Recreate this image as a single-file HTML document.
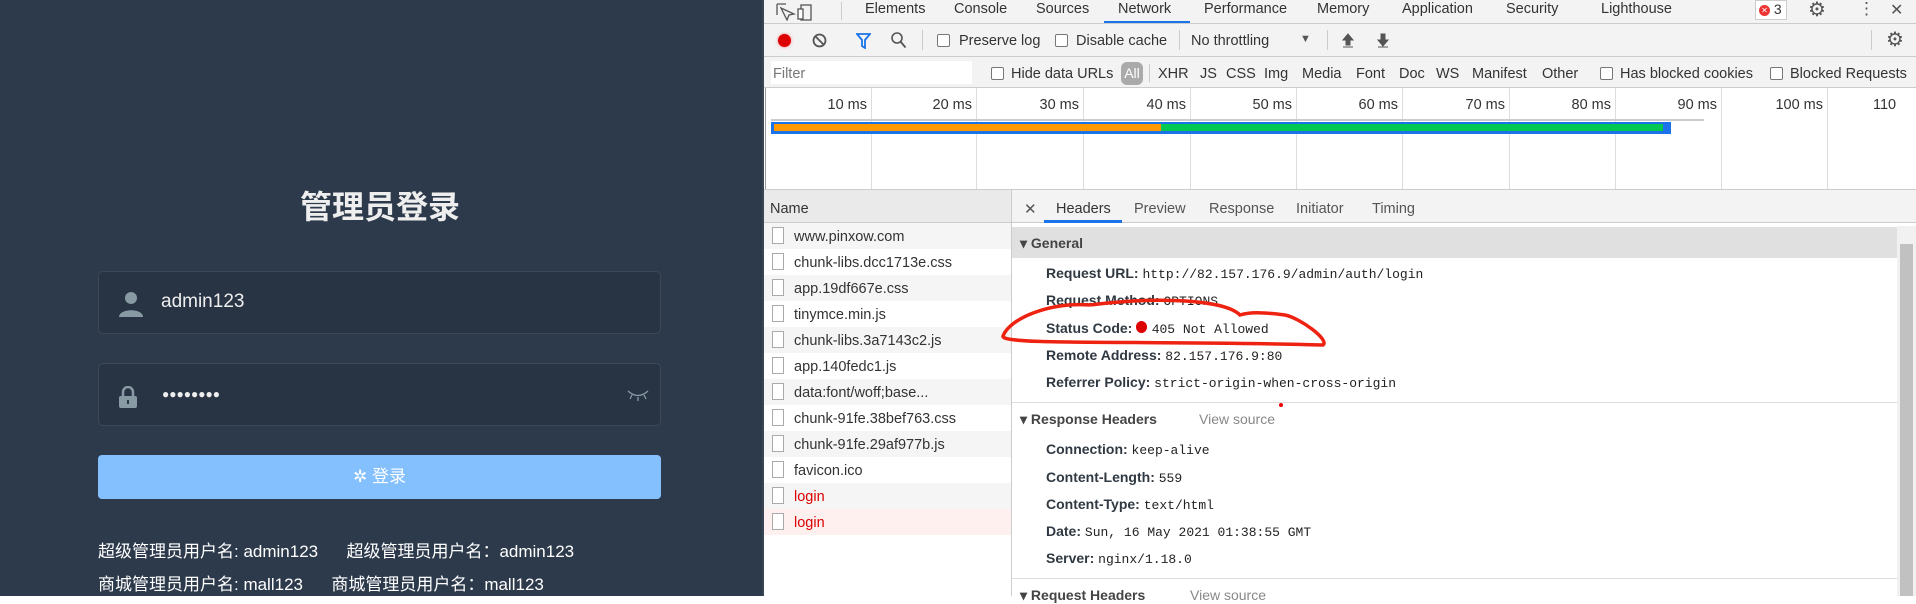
<!DOCTYPE html>
<html><head><meta charset="utf-8"><style>
*{margin:0;padding:0;box-sizing:border-box}
body{width:1916px;height:596px;overflow:hidden;position:relative;font-family:"Liberation Sans","Noto Sans CJK SC",sans-serif;background:#fff}
.a{position:absolute;white-space:nowrap}
#left{position:absolute;left:0;top:0;width:763px;height:596px;background:#2d3a4b}
.inp{position:absolute;left:98px;width:563px;height:63px;background:#283443;border:1px solid rgba(255,255,255,.1);border-radius:5px}
.dt{font-size:14.5px;color:#333}
.cb{position:absolute;width:13px;height:13px;border:1px solid #777;border-radius:2px;background:#fff}
.row{position:absolute;left:764px;width:247px;height:26px;font-size:14.5px;color:#333}
.row .ic{position:absolute;left:8px;top:4px;width:12px;height:17px;border:1px solid #aaa;background:#fff}
.row span{position:absolute;left:30px;top:6px}
.k{font-weight:bold;color:#303942;font-size:14px}
.v{font-family:"Liberation Mono","DejaVu Sans Mono",monospace;font-size:13px;color:#222}
.grid{position:absolute;top:88px;width:1px;height:102px;background:#ddd}
.lbl{position:absolute;top:97px;font-size:14.5px;color:#333;text-align:right;width:60px}
</style></head><body>
<div id="left">
  <div class="a" style="left:0;width:760px;top:182px;text-align:center;font-size:32px;font-weight:bold;color:#eee">管理员登录</div>
  <div class="inp" style="top:271px">
    <svg class="a" style="left:19px;top:19px" width="26" height="26" viewBox="0 0 26 26"><circle cx="13" cy="7" r="6" fill="#889aa4"/><path d="M1 26 C1 17 25 17 25 26Z" fill="#889aa4"/></svg>
    <div class="a" style="left:62px;top:19px;font-size:19px;color:#eee">admin123</div>
  </div>
  <div class="inp" style="top:363px">
    <svg class="a" style="left:19px;top:22px" width="20" height="22" viewBox="0 0 20 22"><path d="M5 10V6a5 5 0 0 1 10 0v4" stroke="#889aa4" stroke-width="2.5" fill="none"/><rect x="1" y="10" width="18" height="12" rx="2" fill="#889aa4"/><rect x="9" y="14" width="2" height="4" fill="#283443"/></svg>
    <div class="a" style="left:63px;top:23px;font-size:12px;color:#eee;letter-spacing:0px">●●●●●●●●</div>
    <svg class="a" style="left:528px;top:24px" width="22" height="14" viewBox="0 0 22 14"><path d="M1 3 Q11 12 21 3 M5 7 L3 11 M11 9 V13 M17 7 L19 11" stroke="#889aa4" stroke-width="1.3" fill="none"/></svg>
  </div>
  <div class="a" style="left:98px;top:455px;width:563px;height:44px;background:#83c0fd;border-radius:4px;color:#fff;font-size:17px;text-align:center;line-height:44px">✲ 登录</div>
  <div class="a" style="left:98px;top:537px;font-size:17px;color:#fff">超级管理员用户名: admin123 &nbsp;&nbsp;&nbsp;&nbsp; 超级管理员用户名：admin123</div>
  <div class="a" style="left:98px;top:570px;font-size:17px;color:#fff">商城管理员用户名: mall123 &nbsp;&nbsp;&nbsp;&nbsp; 商城管理员用户名：mall123</div>
</div>
<div class="a" style="left:762px;top:0;width:2px;height:596px;background:#3a4553"></div>
<div class="a" style="left:764px;top:0;width:1152px;height:24px;background:#f3f3f3;border-bottom:1px solid #ccc"></div>
<svg class="a" style="left:776px;top:3px" width="40" height="18" viewBox="0 0 40 18"><path d="M1 1h9M1 1v11M5 5l6 12 2-5 5-1z" stroke="#555" fill="none" stroke-width="1.3"/><rect x="25" y="2" width="10" height="15" stroke="#555" fill="none" stroke-width="1.3"/><rect x="22" y="6" width="5" height="10" stroke="#555" fill="#fff" stroke-width="1.3"/></svg>
<div class="a" style="left:841px;top:2px;width:1px;height:18px;background:#ccc"></div>
<div class="a dt" style="left:865px;top:1px">Elements</div>
<div class="a dt" style="left:954px;top:1px">Console</div>
<div class="a dt" style="left:1036px;top:1px">Sources</div>
<div class="a dt" style="left:1118px;top:1px">Network</div>
<div class="a" style="left:1104px;top:21px;width:86px;height:2px;background:#1a73e8"></div>
<div class="a dt" style="left:1204px;top:1px">Performance</div>
<div class="a dt" style="left:1317px;top:1px">Memory</div>
<div class="a dt" style="left:1402px;top:1px">Application</div>
<div class="a dt" style="left:1506px;top:1px">Security</div>
<div class="a dt" style="left:1601px;top:1px">Lighthouse</div>
<div class="a" style="left:1755px;top:0;width:32px;height:20px;border:1px solid #ccc;background:#fff;font-size:14px;color:#333;padding-left:3px"><span style="display:inline-block;width:11px;height:11px;border-radius:50%;background:#e33;color:#fff;font-size:8px;text-align:center;line-height:11px;vertical-align:1px">✕</span> 3</div>
<div class="a" style="left:1808px;top:-3px;font-size:20px;color:#555">⚙</div>
<div class="a" style="left:1858px;top:-1px;font-size:17px;color:#555">⋮</div>
<div class="a" style="left:1890px;top:0;font-size:16px;color:#555">✕</div>
<div class="a" style="left:764px;top:24px;width:1152px;height:33px;background:#f3f3f3;border-bottom:1px solid #ccc"></div>
<div class="a" style="left:778px;top:34px;width:13px;height:13px;border-radius:50%;background:#d00;box-shadow:0 0 3px #f88"></div>
<svg class="a" style="left:812px;top:33px" width="15" height="15" viewBox="0 0 15 15"><circle cx="7.5" cy="7.5" r="6" stroke="#555" stroke-width="1.8" fill="none"/><path d="M3.5 3.5l8 8" stroke="#555" stroke-width="1.8"/></svg>
<svg class="a" style="left:856px;top:33px" width="15" height="16" viewBox="0 0 15 16"><path d="M1 1h13L9 7v8L6 13V7z" fill="none" stroke="#1a73e8" stroke-width="1.8"/></svg>
<svg class="a" style="left:891px;top:32px" width="16" height="17" viewBox="0 0 16 17"><circle cx="6" cy="6" r="5" stroke="#555" stroke-width="1.6" fill="none"/><path d="M9.5 9.5l5 6" stroke="#555" stroke-width="1.8"/></svg>
<div class="a" style="left:922px;top:30px;width:1px;height:20px;background:#ccc"></div>
<div class="cb" style="left:937px;top:34px"></div><div class="a dt" style="left:959px;top:33px">Preserve log</div>
<div class="cb" style="left:1055px;top:34px"></div><div class="a dt" style="left:1076px;top:33px">Disable cache</div>
<div class="a" style="left:1179px;top:30px;width:1px;height:20px;background:#ccc"></div>
<div class="a dt" style="left:1191px;top:33px">No throttling</div>
<div class="a" style="left:1300px;top:33px;font-size:11px;color:#555">▼</div>
<div class="a" style="left:1327px;top:30px;width:1px;height:20px;background:#ccc"></div>
<svg class="a" style="left:1342px;top:32px" width="50" height="16" viewBox="0 0 50 16"><path d="M6 2l-5 6h3v5h4V8h3z M1 15h10" fill="#555" stroke="#555" stroke-width="1"/><path d="M41 14l-5-6h3V2h4v6h3z M36 15h10" fill="#555" stroke="#555" stroke-width="1"/></svg>
<div class="a" style="left:1871px;top:30px;width:1px;height:20px;background:#ccc"></div>
<div class="a" style="left:1886px;top:27px;font-size:20px;color:#555">⚙</div>
<div class="a" style="left:764px;top:57px;width:1152px;height:31px;background:#f3f3f3;border-bottom:1px solid #ccc"></div>
<div class="a" style="left:771px;top:61px;width:201px;height:23px;background:#fff"></div>
<div class="a" style="left:773px;top:66px;font-size:14.5px;color:#777">Filter</div>
<div class="cb" style="left:991px;top:67px"></div><div class="a dt" style="left:1011px;top:66px">Hide data URLs</div>
<div class="a" style="left:1121px;top:62px;width:22px;height:23px;border-radius:6px;background:#aaa;color:#fff;font-size:14px;text-align:center;line-height:23px">All</div>
<div class="a" style="left:1149px;top:64px;width:1px;height:18px;background:#ccc"></div>
<div class="a dt" style="left:1158px;top:66px">XHR</div>
<div class="a dt" style="left:1200px;top:66px">JS</div>
<div class="a dt" style="left:1226px;top:66px">CSS</div>
<div class="a dt" style="left:1264px;top:66px">Img</div>
<div class="a dt" style="left:1302px;top:66px">Media</div>
<div class="a dt" style="left:1356px;top:66px">Font</div>
<div class="a dt" style="left:1399px;top:66px">Doc</div>
<div class="a dt" style="left:1436px;top:66px">WS</div>
<div class="a dt" style="left:1472px;top:66px">Manifest</div>
<div class="a dt" style="left:1542px;top:66px">Other</div>
<div class="cb" style="left:1600px;top:67px"></div><div class="a dt" style="left:1620px;top:66px">Has blocked cookies</div>
<div class="cb" style="left:1770px;top:67px"></div><div class="a dt" style="left:1790px;top:66px">Blocked Requests</div>
<div class="grid" style="left:765px;background:#999"></div>
<div class="grid" style="left:871px"></div><div class="lbl" style="left:807px">10 ms</div>
<div class="grid" style="left:976px"></div><div class="lbl" style="left:912px">20 ms</div>
<div class="grid" style="left:1083px"></div><div class="lbl" style="left:1019px">30 ms</div>
<div class="grid" style="left:1190px"></div><div class="lbl" style="left:1126px">40 ms</div>
<div class="grid" style="left:1296px"></div><div class="lbl" style="left:1232px">50 ms</div>
<div class="grid" style="left:1402px"></div><div class="lbl" style="left:1338px">60 ms</div>
<div class="grid" style="left:1509px"></div><div class="lbl" style="left:1445px">70 ms</div>
<div class="grid" style="left:1615px"></div><div class="lbl" style="left:1551px">80 ms</div>
<div class="grid" style="left:1721px"></div><div class="lbl" style="left:1657px">90 ms</div>
<div class="grid" style="left:1827px"></div><div class="lbl" style="left:1763px">100 ms</div>
<div class="a dt" style="left:1873px;top:97px">110</div>
<div class="a" style="left:771px;top:119px;width:933px;height:2px;background:#ccc"></div>
<div class="a" style="left:771px;top:122px;width:900px;height:12px;background:#1a73e8"></div>
<div class="a" style="left:774px;top:124px;width:387px;height:7px;background:#f90"></div>
<div class="a" style="left:1161px;top:124px;width:502px;height:7px;background:#00c853"></div>
<div class="a" style="left:764px;top:189px;width:1152px;height:1px;background:#ccc"></div>
<div class="a" style="left:764px;top:190px;width:247px;height:33px;background:#eaeaea;border-bottom:1px solid #ccc"></div>
<div class="a dt" style="left:770px;top:201px">Name</div>
<div class="row" style="top:223px;background:#f5f5f5"><div class="ic"></div><span>www.pinxow.com</span></div>
<div class="row" style="top:249px"><div class="ic"></div><span>chunk-libs.dcc1713e.css</span></div>
<div class="row" style="top:275px;background:#f5f5f5"><div class="ic"></div><span>app.19df667e.css</span></div>
<div class="row" style="top:301px"><div class="ic"></div><span>tinymce.min.js</span></div>
<div class="row" style="top:327px;background:#f5f5f5"><div class="ic"></div><span>chunk-libs.3a7143c2.js</span></div>
<div class="row" style="top:353px"><div class="ic"></div><span>app.140fedc1.js</span></div>
<div class="row" style="top:379px;background:#f5f5f5"><div class="ic"></div><span>data:font/woff;base...</span></div>
<div class="row" style="top:405px"><div class="ic"></div><span>chunk-91fe.38bef763.css</span></div>
<div class="row" style="top:431px;background:#f5f5f5"><div class="ic"></div><span>chunk-91fe.29af977b.js</span></div>
<div class="row" style="top:457px"><div class="ic"></div><span>favicon.ico</span></div>
<div class="row" style="top:483px;background:#f5f5f5;color:#d00"><div class="ic"></div><span>login</span></div>
<div class="row" style="top:509px;background:#fff0f0;color:#d00"><div class="ic"></div><span>login</span></div>
<div class="a" style="left:1011px;top:190px;width:1px;height:406px;background:#ccc"></div>
<div class="a" style="left:1012px;top:190px;width:904px;height:33px;background:#f3f3f3;border-bottom:1px solid #ccc"></div>
<div class="a" style="left:1024px;top:200px;font-size:15px;color:#555">✕</div>
<div class="a dt" style="left:1056px;top:201px">Headers</div>
<div class="a" style="left:1044px;top:220px;width:78px;height:3px;background:#1a73e8"></div>
<div class="a dt" style="left:1134px;top:201px;color:#555">Preview</div>
<div class="a dt" style="left:1209px;top:201px;color:#555">Response</div>
<div class="a dt" style="left:1296px;top:201px;color:#555">Initiator</div>
<div class="a dt" style="left:1372px;top:201px;color:#555">Timing</div>
<div class="a" style="left:1012px;top:227px;width:885px;height:31px;background:#e0e0e0"></div>
<div class="a k" style="left:1020px;top:235px;color:#444">▾ General</div>
<div class="a" style="left:1046px;top:265px"><span class="k">Request URL: </span><span class="v">http://82.157.176.9/admin/auth/login</span></div>
<div class="a" style="left:1046px;top:292px"><span class="k">Request Method: </span><span class="v">OPTIONS</span></div>
<div class="a" style="left:1046px;top:320px"><span class="k">Status Code: </span><span style="display:inline-block;width:11px;height:12px;border-radius:50%;background:#d00"></span> <span class="v">405 Not Allowed</span></div>
<div class="a" style="left:1046px;top:347px"><span class="k">Remote Address: </span><span class="v">82.157.176.9:80</span></div>
<div class="a" style="left:1046px;top:374px"><span class="k">Referrer Policy: </span><span class="v">strict-origin-when-cross-origin</span></div>
<div class="a" style="left:1012px;top:402px;width:885px;height:1px;background:#ddd"></div>
<div class="a" style="left:1279px;top:403px;width:4px;height:4px;border-radius:50%;background:#e00"></div>
<div class="a k" style="left:1020px;top:411px;color:#444">▾ Response Headers</div>
<div class="a" style="left:1199px;top:411px;font-size:14px;color:#888">View source</div>
<div class="a" style="left:1046px;top:441px"><span class="k">Connection: </span><span class="v">keep-alive</span></div>
<div class="a" style="left:1046px;top:469px"><span class="k">Content-Length: </span><span class="v">559</span></div>
<div class="a" style="left:1046px;top:496px"><span class="k">Content-Type: </span><span class="v">text/html</span></div>
<div class="a" style="left:1046px;top:523px"><span class="k">Date: </span><span class="v">Sun, 16 May 2021 01:38:55 GMT</span></div>
<div class="a" style="left:1046px;top:550px"><span class="k">Server: </span><span class="v">nginx/1.18.0</span></div>
<div class="a" style="left:1012px;top:578px;width:885px;height:1px;background:#ddd"></div>
<div class="a k" style="left:1020px;top:587px;color:#444">▾ Request Headers</div>
<div class="a" style="left:1190px;top:587px;font-size:14px;color:#888">View source</div>
<div class="a" style="left:1897px;top:226px;width:19px;height:370px;background:#f1f1f1"></div>
<div class="a" style="left:1900px;top:244px;width:13px;height:352px;background:#c1c1c1"></div>
<svg class="a" style="left:0;top:0" width="1916" height="596"><path d="M1090 305 C1050 302 1010 318 1003 336 C1000 346 1150 340 1323 345 C1330 340 1300 318 1285 315 C1260 312 1250 312 1240 315 C1225 300 1160 296 1090 305" stroke="#e21" stroke-width="3.5" fill="none"/></svg>
</body></html>
